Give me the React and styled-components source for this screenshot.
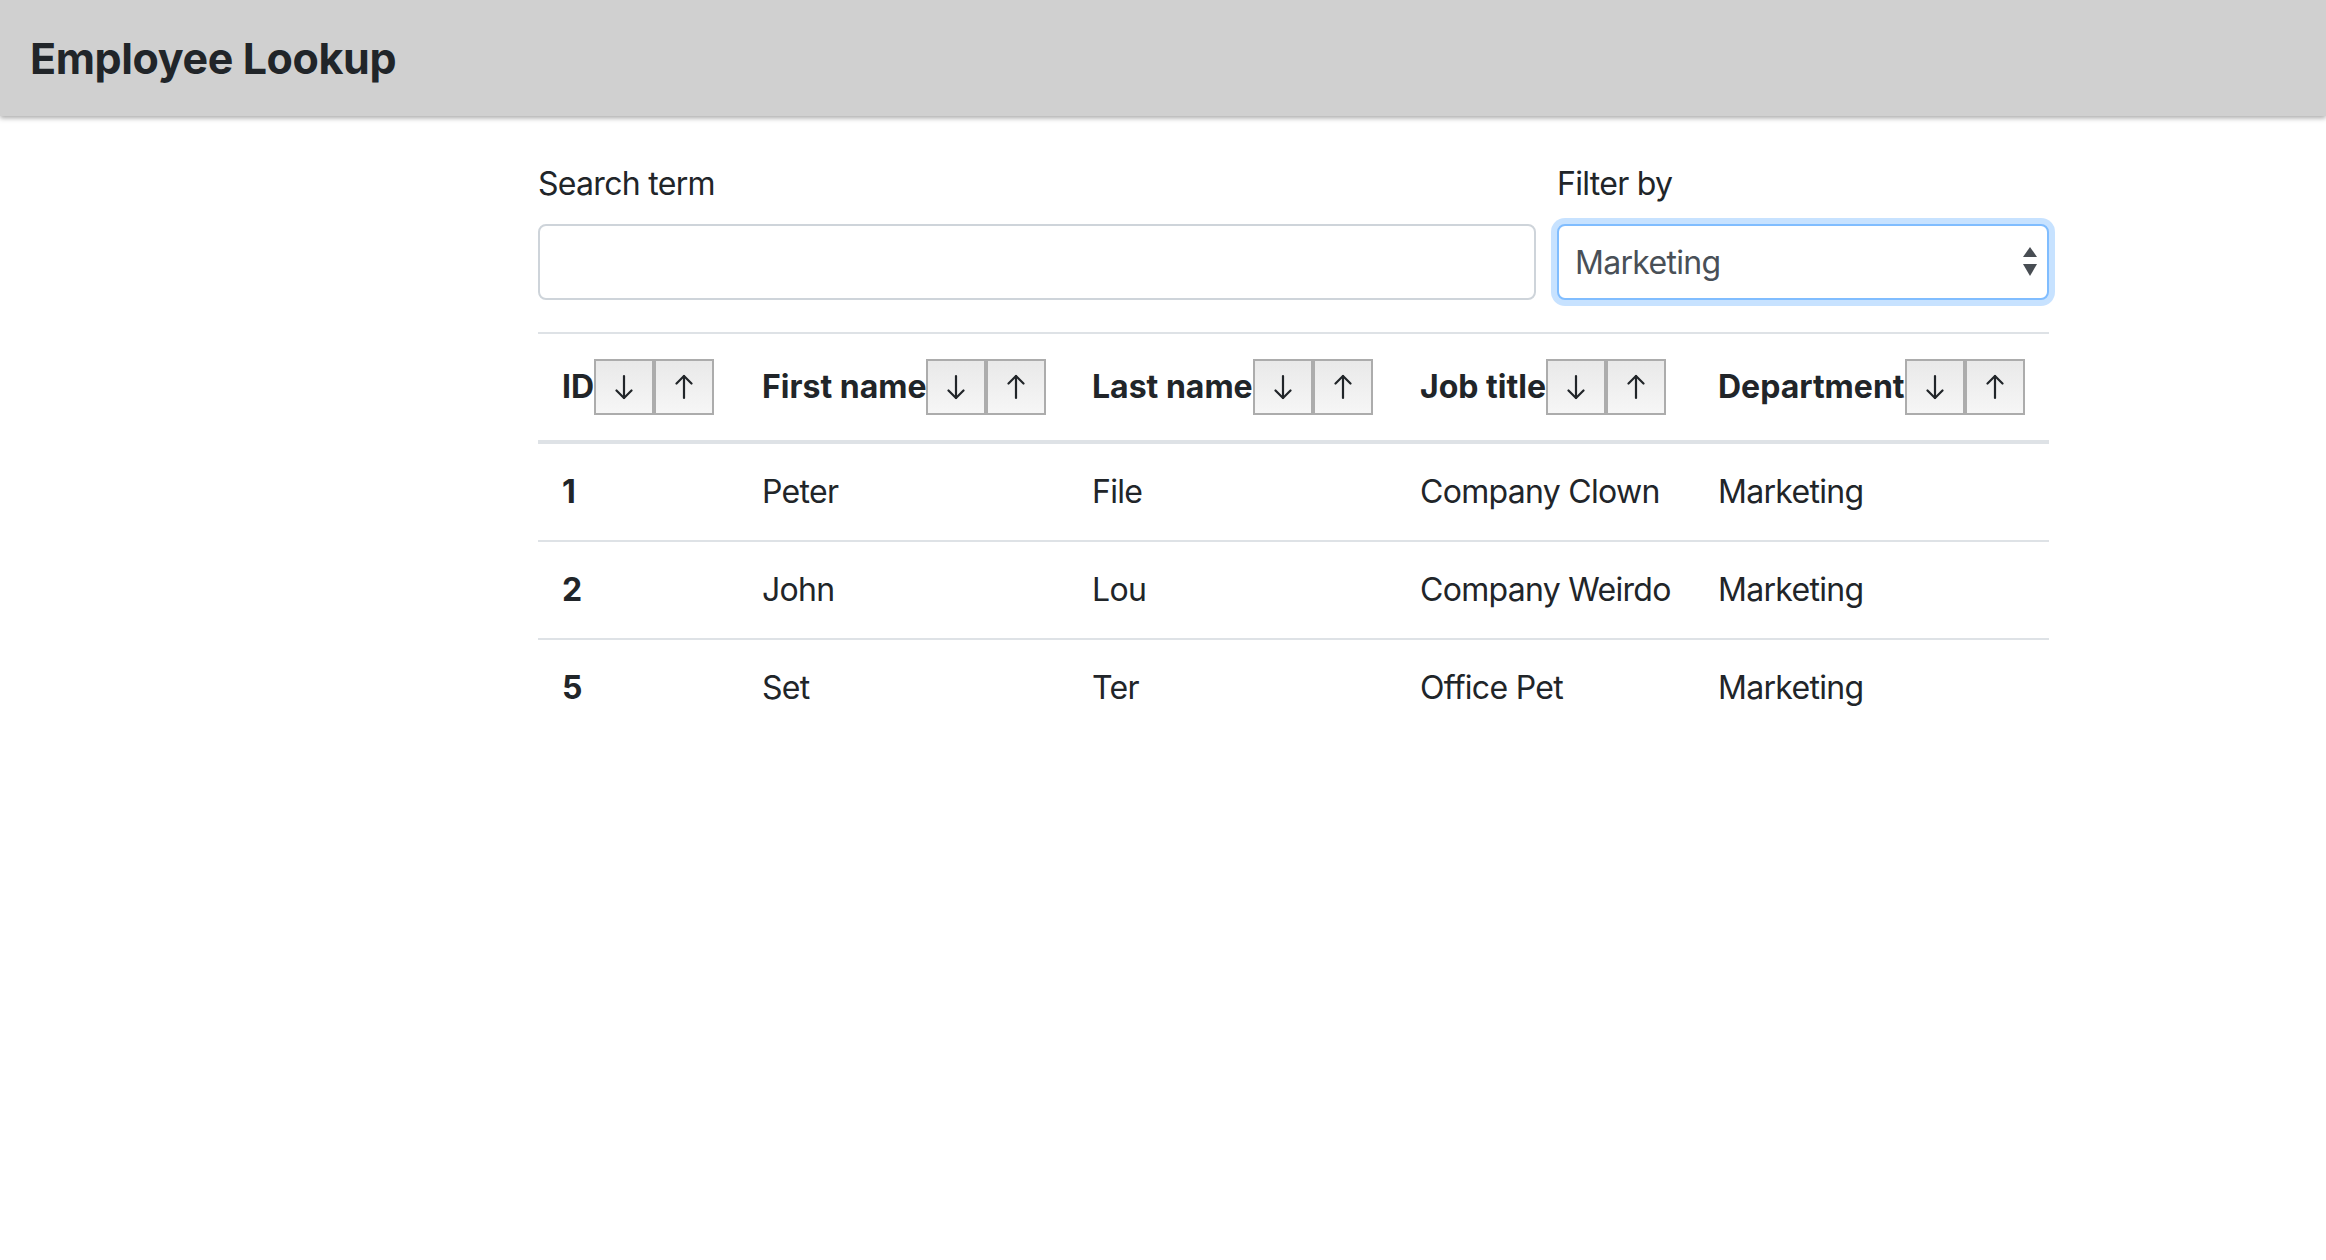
import React from 'react'
import styled, { createGlobalStyle } from 'styled-components';

const GlobalStyle = createGlobalStyle`
    html, body {
        margin: 0;
        padding: 0;
        background: #ffffff;
    }
    body {
        font-family: Inter, "Noto Sans", "Liberation Sans", sans-serif;
        color: #212529;
    }
`;

const columns = [
    { key: 'id', label: 'ID', width: 200 },
    { key: 'firstName', label: 'First name', width: 330 },
    { key: 'lastName', label: 'Last name', width: 328 },
    { key: 'jobTitle', label: 'Job title', width: 298 },
    { key: 'department', label: 'Department', width: 355 },
];

const employees = [
    { id: 1, firstName: 'Peter', lastName: 'File', jobTitle: 'Company Clown', department: 'Marketing' },
    { id: 2, firstName: 'John', lastName: 'Lou', jobTitle: 'Company Weirdo', department: 'Marketing' },
    { id: 5, firstName: 'Set', lastName: 'Ter', jobTitle: 'Office Pet', department: 'Marketing' },
];

function ArrowIcon({ up }) {
    return (
        <svg width="18" height="26" viewBox="0 0 18 26" fill="none"
            stroke="#212529" strokeWidth="2.2" strokeLinecap="round" strokeLinejoin="round">
            {up ? (
                <>
                    <path d="M9 24V2" />
                    <path d="M1.5 9.5L9 2l7.5 7.5" />
                </>
            ) : (
                <>
                    <path d="M9 2v22" />
                    <path d="M1.5 16.5L9 24l7.5-7.5" />
                </>
            )}
        </svg>
    )
}

function SelectArrows() {
    return (
        <svg width="14" height="30" viewBox="0 0 14 30" fill="#484d53">
            <path d="M7 0L14 10H0z" />
            <path d="M0 17h14L7 29z" />
        </svg>
    )
}

export default function App() {
    return (
        <>
            <GlobalStyle />
            <TopBar>
                <Title>Employee Lookup</Title>
            </TopBar>
            <Main>
                <FormRow>
                    <FormGroup>
                        <Label htmlFor="search">Search term</Label>
                        <TextInput id="search" type="text" />
                    </FormGroup>
                    <FormGroup>
                        <Label htmlFor="filter">Filter by</Label>
                        <SelectWrap>
                            <Select id="filter" defaultValue="Marketing">
                                <option>All</option>
                                <option>Marketing</option>
                                <option>Sales</option>
                            </Select>
                            <SelectIcon>
                                <SelectArrows />
                            </SelectIcon>
                        </SelectWrap>
                    </FormGroup>
                </FormRow>

                <Table>
                    <colgroup>
                        {columns.map((c) => (
                            <Col key={c.key} $width={c.width} />
                        ))}
                    </colgroup>
                    <thead>
                        <tr>
                            {columns.map((c) => (
                                <HeadCell key={c.key}>
                                    <HeadInner>
                                        {c.label}
                                        <SortButton aria-label="sort descending"><ArrowIcon /></SortButton>
                                        <SortButton aria-label="sort ascending"><ArrowIcon up /></SortButton>
                                    </HeadInner>
                                </HeadCell>
                            ))}
                        </tr>
                    </thead>
                    <tbody>
                        {employees.map((e) => (
                            <Row key={e.id}>
                                <Cell as="th" scope="row" $bold>{e.id}</Cell>
                                <Cell>{e.firstName}</Cell>
                                <Cell>{e.lastName}</Cell>
                                <Cell>{e.jobTitle}</Cell>
                                <Cell>{e.department}</Cell>
                            </Row>
                        ))}
                    </tbody>
                </Table>
            </Main>
        </>
    )
}

const TopBar = styled.header`
    height: 116px;
    display: flex;
    align-items: center;
    padding: 0 30px;
    background-color: #d0d0d0;
    box-shadow: 0 2px 5px rgba(0, 0, 0, 0.35);
    position: relative;
`;

const Title = styled.h1`
    margin: 0;
    font-size: 43px;
    font-weight: 700;
    letter-spacing: -0.4px;
    color: #212529;
`;

const Main = styled.main`
    margin: 0 277px 0 538px;
    padding-top: 44px;
`;

const FormRow = styled.div`
    display: grid;
    grid-template-columns: 998px 1fr;
    gap: 21px;
    margin-bottom: 32px;
`;

const FormGroup = styled.div`
    min-width: 0;
    display: flex;
    flex-direction: column;
`;

const Label = styled.label`
    font-size: 32px;
    line-height: 48px;
    letter-spacing: -0.7px;
    margin-bottom: 16px;
`;

const TextInput = styled.input`
    box-sizing: border-box;
    height: 76px;
    width: 100%;
    border: 2px solid #ced4da;
    border-radius: 8px;
    padding: 0 24px;
    font-family: inherit;
    font-size: 32px;
    color: #495057;
    outline: none;
`;

const SelectWrap = styled.div`
    position: relative;
`;

const Select = styled.select`
    box-sizing: border-box;
    appearance: none;
    width: 100%;
    height: 76px;
    border: 2px solid #80bdff;
    border-radius: 8px;
    box-shadow: 0 0 0 6px rgba(0, 123, 255, 0.22);
    padding: 0 50px 0 16px;
    background: #fff;
    font-family: inherit;
    font-size: 32px;
    letter-spacing: -0.7px;
    color: #495057;
    outline: none;
`;

const SelectIcon = styled.span`
    position: absolute;
    right: 12px;
    top: 50%;
    transform: translateY(-50%);
    display: flex;
    pointer-events: none;
`;

const Table = styled.table`
    width: 100%;
    table-layout: fixed;
    border-collapse: collapse;
    font-size: 32px;
    line-height: 48px;
`;

const Col = styled.col`
    width: ${(p) => p.$width}px;
`;

const HeadCell = styled.th`
    text-align: left;
    padding: 24px 0 24px 24px;
    border-top: 2px solid #dee2e6;
    border-bottom: 4px solid #dee2e6;
    font-weight: 700;
    white-space: nowrap;
`;

const HeadInner = styled.div`
    display: flex;
    align-items: center;
    height: 58px;
`;

const SortButton = styled.button`
    box-sizing: border-box;
    width: 60px;
    height: 56px;
    padding: 0;
    display: flex;
    align-items: center;
    justify-content: center;
    border: 2px solid #acacac;
    background: linear-gradient(#e9e9e9, #f6f6f6);
    cursor: pointer;
`;

const Row = styled.tr`
    & + & > * {
        border-top: 2px solid #dee2e6;
    }
`;

const Cell = styled.td`
    text-align: left;
    padding: 24px;
    font-weight: ${(p) => (p.$bold ? 700 : 400)};
    letter-spacing: ${(p) => (p.$bold ? 'normal' : '-0.7px')};
    white-space: nowrap;
`;
